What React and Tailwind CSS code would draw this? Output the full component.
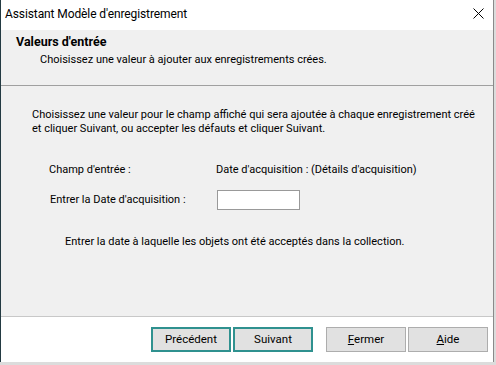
import React from "react";

const font = { fontFamily: 'Roboto, "Liberation Sans", sans-serif' };

function Btn({ children, primary }) {
  return (
    <div
      className={
        "w-[80px] h-[25px] flex items-center justify-center bg-[#e1e1e1] text-[11.5px] text-black whitespace-nowrap " +
        (primary ? "border-2 border-[#2f918f]" : "border border-[#adadad]")
      }
    >
      {children}
    </div>
  );
}

export default function App() {
  return (
    <div className="w-[496px] h-[365px] bg-[#dcdcdc] overflow-hidden" style={font}>
      <div className="w-[494px] h-[362px] flex flex-col border-l border-l-[#233a42] border-r border-r-[#8a8a8a] bg-white">
        <div className="h-[30px] shrink-0 flex items-center justify-between pl-[4px] pr-[8px] pb-[3px] bg-white">
          <span className="text-[12px] text-black leading-none whitespace-nowrap tracking-[-0.1px]">Assistant Modèle d'enregistrement</span>
          <svg width="11" height="11" viewBox="0 0 11 11" className="mr-[1px]">
            <path d="M0.5 0.5 L10.5 10.5 M10.5 0.5 L0.5 10.5" stroke="#000" strokeWidth="1" fill="none" />
          </svg>
        </div>
        <div className="h-[56px] shrink-0 bg-[#f0f0f0] border-b border-[#a0a0a0] pt-[4px] pl-[15px] whitespace-nowrap">
          <div className="text-[12.5px] leading-[16px] font-bold text-black">Valeurs d'entrée</div>
          <div className="text-[11px] leading-[16px] text-black mt-[2px] pl-[24px]">
            Choisissez une valeur à ajouter aux enregistrements crées.
          </div>
        </div>
        <div className="flex-1 bg-[#f0f0f0] border-b border-[#c8c8c8] pt-[22px] text-[11px] text-black whitespace-nowrap">
          <div className="pl-[31px] leading-[14px]">
            <div>Choisissez une valeur pour le champ affiché qui sera ajoutée à chaque enregistrement créé</div>
            <div>et cliquer Suivant, ou accepter les défauts et cliquer Suivant.</div>
          </div>
          <div className="flex mt-[27px] leading-[14px]">
            <div className="w-[215px] shrink-0 pl-[48px]">Champ d'entrée :</div>
            <div>Date d'acquisition : (Détails d'acquisition)</div>
          </div>
          <div className="flex items-center mt-[13px] h-[20px]">
            <div className="w-[216px] shrink-0 pl-[49px] leading-[14px]">Entrer la Date d'acquisition :</div>
            <div className="w-[83px] h-[20px] shrink-0 bg-white border border-[#999999]" />
          </div>
          <div className="mt-[25px] pl-[64px] leading-[14px]">
            Entrer la date à laquelle les objets ont été acceptés dans la collection.
          </div>
        </div>
        <div className="h-[45px] shrink-0 bg-white flex items-start justify-end pt-[10px] pr-[5px]">
          <div className="flex gap-[2px]">
            <Btn primary>Précédent</Btn>
            <Btn primary>Suivant</Btn>
          </div>
          <div className="flex gap-[2px] ml-[13px]">
            <Btn>
              <span><span className="underline">F</span>ermer</span>
            </Btn>
            <Btn>
              <span><span className="underline">A</span>ide</span>
            </Btn>
          </div>
        </div>
      </div>
    </div>
  );
}
